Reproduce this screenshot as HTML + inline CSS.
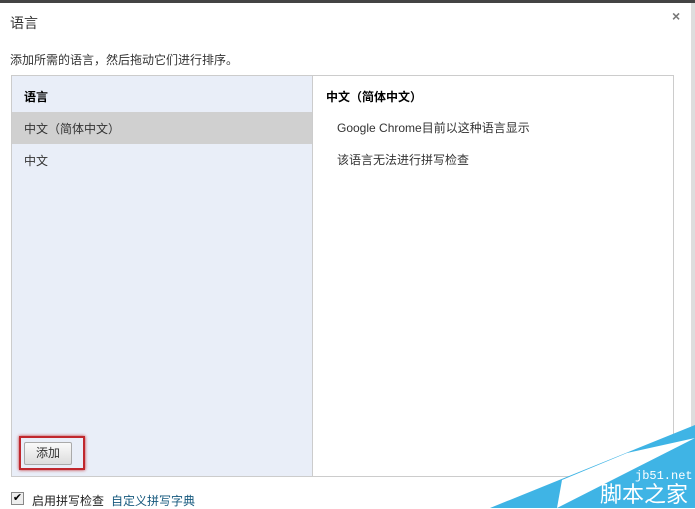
<!DOCTYPE html><html><head><style>
body{margin:0;width:695px;height:508px;background:#fff;position:relative;overflow:hidden;font-family:"Liberation Sans","Noto Sans CJK SC",sans-serif;font-size:12px;color:#333}
.a{position:absolute}
</style></head><body>
<div class="a" style="left:0;top:0;width:695px;height:3px;background:#444"></div>
<div class="a" style="left:691px;top:3px;width:4px;height:505px;background:#ddd"></div>
<div class="a" style="left:10px;top:13px;font-size:14px;color:#333">语言</div>
<div class="a" style="left:672px;top:8px;font-size:14px;color:#777;font-weight:bold">×</div>
<div class="a" style="left:10px;top:51px;color:#333">添加所需的语言，然后拖动它们进行排序。</div>
<div class="a" style="left:11px;top:75px;width:661px;height:400px;border:1px solid #ccc;background:#fff"></div>
<div class="a" style="left:12px;top:76px;width:300px;height:400px;background:#e9eef8;border-right:1px solid #ccc"></div>
<div class="a" style="left:24px;top:88px;font-weight:bold;color:#000">语言</div>
<div class="a" style="left:12px;top:112px;width:300px;height:32px;background:#d0d0d0"></div>
<div class="a" style="left:24px;top:120px">中文（简体中文）</div>
<div class="a" style="left:24px;top:152px">中文</div>
<div class="a" style="left:326px;top:88px;font-weight:bold;color:#000">中文（简体中文）</div>
<div class="a" style="left:337px;top:119px">Google Chrome目前以这种语言显示</div>
<div class="a" style="left:337px;top:151px">该语言无法进行拼写检查</div>
<div class="a" style="left:19px;top:436px;width:62px;height:30px;border:2px solid #c0272d;box-shadow:0 0 3px #c0272d"></div>
<div class="a" style="left:24px;top:442px;width:46px;height:21px;border:1px solid #aaa;border-radius:2px;background:linear-gradient(#fafafa,#ddd);text-align:center;line-height:21px">添加</div>
<div class="a" style="left:11px;top:492px;width:11px;height:11px;border:1px solid #888;background:#eee;font-size:11px;line-height:11px;text-align:center;color:#000">✔</div>
<div class="a" style="left:32px;top:492px;color:#222">启用拼写检查</div>
<div class="a" style="left:111px;top:492px;color:#15587d">自定义拼写字典</div>
<svg class="a" style="left:0;top:0" width="695" height="508"><polygon points="490,508 695,425 695,508" fill="#3fb4e5"/><polygon points="557,508 562,480 627,453 695,438" fill="#fff"/></svg>
<div class="a" style="left:635px;top:469px;color:#fff;font-family:'Liberation Mono',monospace;font-size:12px">jb51.net</div>
<div class="a" style="left:600px;top:482px;color:#fff;font-size:22px;line-height:26px">脚本之家</div>
</body></html>
